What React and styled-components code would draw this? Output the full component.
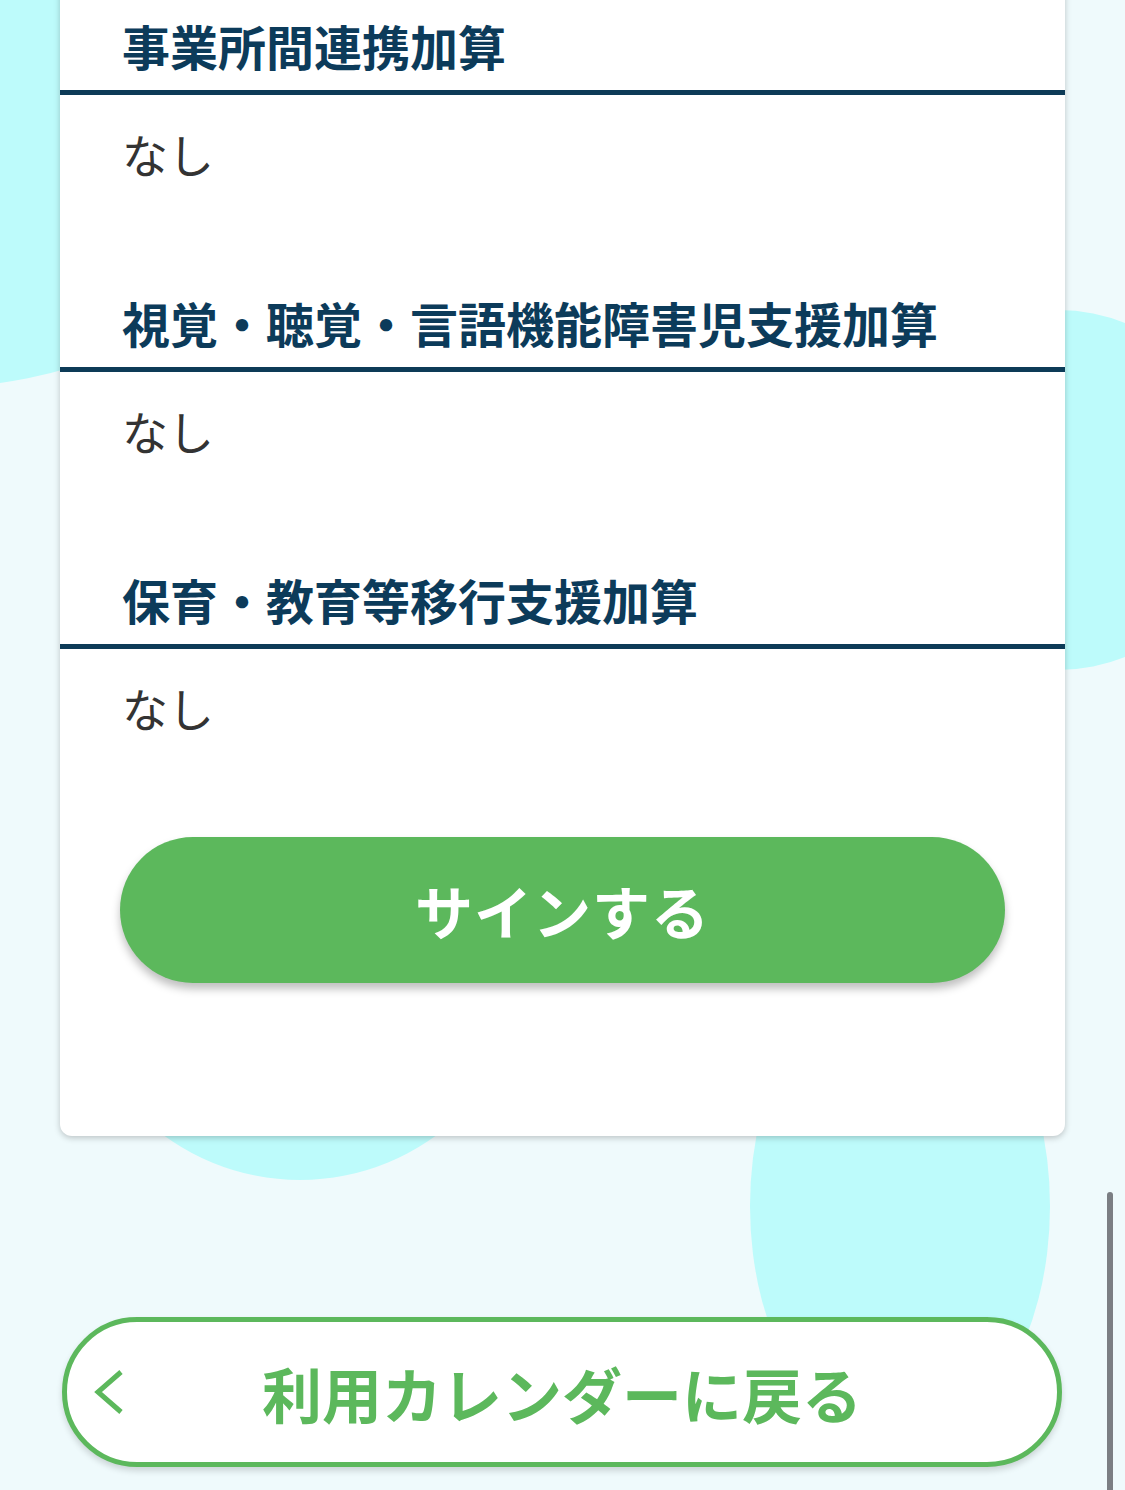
import React from "react";
import styled, { createGlobalStyle } from "styled-components";

const GlobalStyle = createGlobalStyle`
  html, body {
    margin: 0;
    padding: 0;
    background: #effafc;
  }
  body {
    font-family: "Noto Sans CJK JP", "Noto Sans", sans-serif;
  }
`;

const Page = styled.div`
  position: relative;
  width: 1125px;
  height: 1490px;
  overflow: hidden;
  background: #effafc;
  display: flex;
  flex-direction: column;
`;

const Bubble = styled.div`
  position: absolute;
  background: #bdfbfb;
  border-radius: 50%;
  z-index: 0;
`;

const Card = styled.div`
  position: relative;
  z-index: 1;
  margin: -22px 60px 0 60px;
  padding: 34px 0 153px;
  background: #ffffff;
  border-radius: 12px;
  box-shadow: 0 2px 6px rgba(0, 0, 0, 0.22);
`;

const Section = styled.section`
  & + & {
    margin-top: 101px;
  }
`;

const Heading = styled.h2`
  margin: 0;
  padding: 0 62px 11px;
  border-bottom: 5px solid #0d3b57;
  font-size: 48px;
  line-height: 67px;
  font-weight: 700;
  color: #0c3b5a;
`;

const Value = styled.p`
  margin: 0;
  padding: 25px 62px 2px;
  font-size: 46px;
  line-height: 66px;
  font-weight: 400;
  color: #333333;
`;

const ButtonWrap = styled.div`
  padding: 95px 60px 0 60px;
`;

const SignButton = styled.button`
  width: 100%;
  height: 146px;
  border: none;
  border-radius: 73px;
  background: #5cb85c;
  color: #ffffff;
  font-family: "Noto Sans CJK JP", sans-serif;
  font-size: 58px;
  font-weight: 700;
  letter-spacing: 1px;
  box-shadow: 0 6px 8px rgba(0, 0, 0, 0.25);
  cursor: pointer;
`;

const BackButton = styled.button`
  position: relative;
  z-index: 1;
  margin: 181px 63px 0 62px;
  height: 150px;
  box-sizing: border-box;
  border: 5px solid #5cb85c;
  border-radius: 75px;
  background: #ffffff;
  display: grid;
  grid-template-columns: 1fr auto 1fr;
  align-items: center;
  padding: 0;
  color: #5cb85c;
  font-family: "Noto Sans CJK JP", sans-serif;
  font-size: 60px;
  font-weight: 700;
  box-shadow: 0 4px 6px rgba(0, 0, 0, 0.15);
  cursor: pointer;
`;

const BackIcon = styled.svg`
  justify-self: start;
  margin-left: 24px;
  width: 36px;
  height: 46px;
`;

const ScrollThumb = styled.div`
  position: absolute;
  z-index: 2;
  left: 1107px;
  top: 1192px;
  width: 6px;
  height: 320px;
  border-radius: 3px;
  background: #7b7e83;
`;

const sections = [
  { title: "事業所間連携加算", value: "なし" },
  { title: "視覚・聴覚・言語機能障害児支援加算", value: "なし" },
  { title: "保育・教育等移行支援加算", value: "なし" },
];

const App = () => {
  return (
    <Page>
      <GlobalStyle />
      <Bubble style={{ left: -510, top: -513, width: 900, height: 900 }} />
      <Bubble style={{ left: 878, top: 310, width: 360, height: 360 }} />
      <Bubble style={{ left: 70, top: 720, width: 460, height: 460 }} />
      <Bubble style={{ left: 750, top: 964, width: 300, height: 484 }} />

      <Card>
        {sections.map((s) => (
          <Section key={s.title}>
            <Heading>{s.title}</Heading>
            <Value>{s.value}</Value>
          </Section>
        ))}
        <ButtonWrap>
          <SignButton>サインする</SignButton>
        </ButtonWrap>
      </Card>

      <BackButton>
        <BackIcon viewBox="0 0 36 46">
          <polyline
            points="30,3 7,23 30,43"
            fill="none"
            stroke="#5cb85c"
            strokeWidth="5"
          />
        </BackIcon>
        <span>利用カレンダーに戻る</span>
        <span />
      </BackButton>

      <ScrollThumb />
    </Page>
  );
};

export default App;
